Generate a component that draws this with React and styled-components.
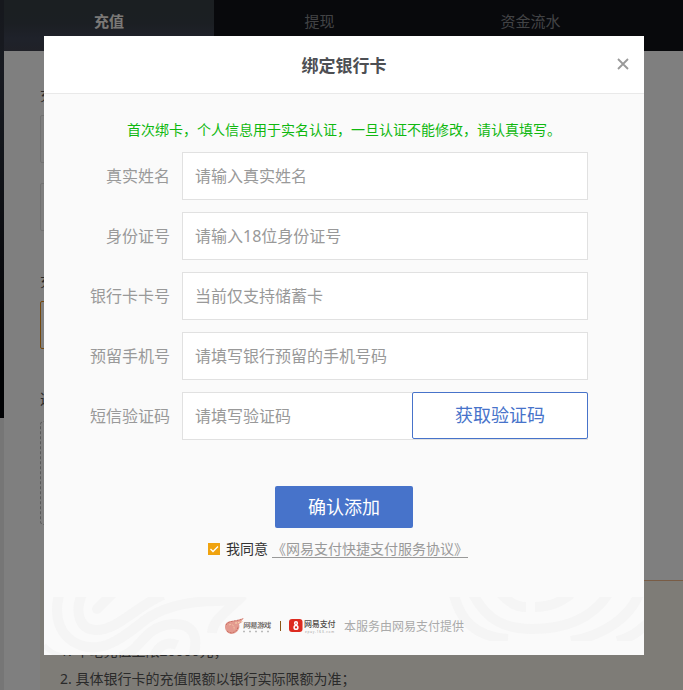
import React, { useState } from 'react'
import styled, { createGlobalStyle } from 'styled-components'

const GlobalStyle = createGlobalStyle`
  * {
    box-sizing: border-box;
  }
  body {
    margin: 0;
    height: 690px;
    overflow: hidden;
    background: #ececec;
    font-family: 'Noto Sans', 'Noto Sans CJK SC', sans-serif;
    color: #333;
  }
  input, button {
    font-family: inherit;
  }
`
const Page = styled.div`
  display: flex;
  height: 690px;
  overflow: hidden;
`
const Edge = styled.div`
  flex: 0 0 4px;
  height: 418px;
  background: linear-gradient(#2c303a 0, #303542 70px, #252b36 150px, #15171f 260px, #030409 370px);
`
const Main = styled.div`
  flex: 1;
  min-width: 0;
  background: #fff;
`
const Tabs = styled.nav`
  display: flex;
  height: 51px;
  background: #101219;
`
const Tab = styled.a`
  width: ${p => (p.$active ? 210 : 211)}px;
  line-height: 42px;
  font-size: 15px;
  text-align: center;
  color: ${p => (p.$active ? '#f4f0ec' : '#85878b')};
  font-weight: ${p => (p.$active ? 700 : 400)};
  background: ${p =>
    p.$active ? 'linear-gradient(#363e44 0, #373e46 45%, #3e4455 75%, #404350)' : 'none'};
`
const Content = styled.div`
  display: flex;
  flex-direction: column;
  padding: 34px 0 0 36px;
`
const SectionTitle = styled.div`
  height: 30px;
  line-height: 20px;
  font-size: 14px;
  color: #555;
`
const Choice = styled.div`
  flex: none;
  height: 48px;
  margin-bottom: 20px;
  border: 1px solid ${p => (p.$selected ? '#e8901a' : '#e2e2e2')};
  border-radius: 2px;
`
const Group = styled.section`
  width: 560px;
  height: ${p => p.$height}px;
`
const AddCard = styled.div`
  height: 104px;
  margin-top: 2px;
  border: 1px dashed #b5b5b5;
  border-radius: 4px;
`
const Tips = styled.ol`
  height: 120px;
  margin: 0;
  padding: 57px 20px 0;
  list-style: none;
  background: linear-gradient(90deg, #fdf9ef 30%, #f2b98a 60%) no-repeat 0 0 / 100% 1px #fdf9ef;
  font-size: 14px;
  line-height: 28px;
  color: #555;
`
const Mask = styled.div`
  position: fixed;
  inset: 0;
  padding: 36px 39px 0 44px;
  background: rgba(0, 0, 0, 0.5);
`
const Dialog = styled.div`
  display: flex;
  flex-direction: column;
  width: 600px;
  height: 619px;
  background: #fafafa;
`
const Header = styled.header`
  display: grid;
  grid-template-columns: 1fr auto 1fr;
  align-items: center;
  height: 58px;
  padding: 0 15px;
  border-bottom: 1px solid #e9e9e9;
  background: #fff;
`
const Title = styled.h2`
  grid-column: 2;
  margin: 0;
  padding-top: 2px;
  font-size: 17px;
  line-height: 24px;
  color: #4d4f53;
`
const Close = styled.button`
  justify-self: end;
  width: 12px;
  height: 12px;
  margin-bottom: 2px;
  padding: 0;
  border: 0;
  background: none;
  svg {
    display: block;
  }
`
const Notice = styled.p`
  margin: 26px 0 12px;
  font-size: 14px;
  line-height: 20px;
  text-align: center;
  color: #0fb80f;
`
const Form = styled.form`
  display: flex;
  flex-direction: column;
  gap: 12px;
`
const Row = styled.label`
  display: grid;
  grid-template-columns: 126px 406px;
  column-gap: 12px;
  height: 48px;
`
const Name = styled.span`
  line-height: 48px;
  font-size: 16px;
  text-align: right;
  color: #999;
`
const Field = styled.span`
  display: flex;
  border: 1px solid #e1e1e1;
  background: #fff;
`
const Input = styled.input`
  flex: 1;
  min-width: 0;
  padding: 0 12px 1px;
  border: 0;
  outline: 0;
  background: none;
  font-size: 16px;
  color: #333;
  &::placeholder {
    color: #999;
    opacity: 1;
  }
`
const CodeButton = styled.button`
  width: 176px;
  height: 47px;
  margin: -1px -1px 0 0;
  padding: 0;
  border: 1px solid #4773ca;
  border-radius: 2px;
  background: #fff;
  font-size: 18px;
  line-height: 45px;
  color: #4773ca;
`
const Submit = styled.button`
  align-self: center;
  width: 138px;
  height: 42px;
  margin-top: 46px;
  padding: 0;
  border: 0;
  border-radius: 2px;
  background: #4773ca;
  font-size: 18px;
  line-height: 42px;
  color: #fff;
`
const Agreement = styled.div`
  display: flex;
  align-items: center;
  height: 20px;
  margin: 11px 0 0 164px;
  font-size: 14px;
  line-height: 18px;
`
const Check = styled.button`
  width: 12px;
  height: 12px;
  margin-right: 6px;
  padding: 0;
  border: 0;
  background: #f0a30f;
  svg {
    display: block;
  }
`
const Terms = styled.a`
  margin-left: 4px;
  height: 17px;
  line-height: 16px;
  border-bottom: 1px solid #999;
  color: #999;
`
const Footer = styled.footer`
  display: grid;
  height: 58px;
  margin-top: auto;
  overflow: hidden;
  > * {
    grid-area: 1 / 1;
  }
`
const Provider = styled.div`
  display: flex;
  align-items: center;
  height: 58px;
  padding-left: 180px;
  font-size: 12px;
  color: #aaa;
`
const Divider = styled.i`
  width: 1px;
  height: 10px;
  margin: 0 8px;
  background: #8b5716;
`
const Note = styled.span`
  margin-left: 7px;
`

const Waves = () => (
  <svg width="600" height="58" fill="none" stroke="#f5f5f5" strokeWidth="10">
    <path d="M15-2C9 22 17 41 36 48C57 56 76 43 96 27C118 8 147 4 174 4C185 4 193 1 197-3" />
    <path d="M38-3C30 16 36 32 51 33C73 34 91 10 119-2" />
    <path d="M53 12L68-3" strokeLinecap="round" />
    <path d="M76 60C98 54 98 30 128 27C150 26 155 40 149 60" />
    <path d="M110 60C114 48 124 44 133 48" />
    <path d="M168 36C169 22 184 14 199-2" />
    <path d="M0 48C5 55 12 57 23 61" strokeWidth="5" />
    <svg width="600" height="44">
      <path d="M410-2C416 22 430 40 464 42" />
      <path d="M429-3C443 24 462 32 488 32C524 32 549 20 564-3" />
      <path d="M457-3C465 6 473 10 482 10" />
      <path d="M491 10C505 10 515 6 527-3" />
      <path d="M527 44C562 38 586 19 595-3" />
      <path d="M573 44C586 41 594 35 604 26" />
    </svg>
  </svg>
)

const GamesLogo = () => (
  <svg width="48" height="18" viewBox="0 0 48 18">
    <path
      d="M1 10C1 6 4 4 8 4C12 3 15 3 20 1L17 4.5L19 4.5L15 7C17 12 12 17 7 17C3 16 1 13 1 10Z"
      fill="#e39a8f"
    />
    <g fill="none" stroke="#bd5a4e" strokeWidth=".7" strokeDasharray="2 1">
      <path d="M2 8C5 3 11 5 19 1.5" />
      <path d="M3 14C7 18 14 15 14 9" />
      <path d="M11 6C14 6 15 5 18 4.5" stroke="#f8d3ac" strokeWidth="1.2" />
      <path d="M5 8C8 6 11 9 10 13" stroke="#f8d3ac" />
    </g>
    <text x="19" y="11.5" fontSize="7.5" fontWeight="500" textLength="28" fill="#5f5955" transform="skewX(-5) translate(1 0)">
      网易游戏
    </text>
    <path d="M19 14.5H46" stroke="#bbb" strokeWidth="1.5" strokeDasharray="2 4" />
  </svg>
)

const PayLogo = () => (
  <svg width="48" height="18" viewBox="0 0 48 18">
    <rect x="0" y="2" width="13.5" height="13" rx="3" fill="#dd2b20" />
    <g fill="none" stroke="#fff" strokeWidth="1.5">
      <circle cx="7" cy="6.2" r="1.4" />
      <circle cx="7" cy="10.4" r="1.9" />
    </g>
    <text x="15" y="9.6" fontSize="8" fontWeight="500" textLength="31.5" fill="#4f4a48">
      网易支付
    </text>
    <text x="16" y="15.8" fontSize="3" textLength="29" fill="#999">
      epay.163.com
    </text>
  </svg>
)

const fields = [
  { name: '真实姓名', placeholder: '请输入真实姓名' },
  { name: '身份证号', placeholder: '请输入18位身份证号' },
  { name: '银行卡卡号', placeholder: '当前仅支持储蓄卡' },
  { name: '预留手机号', placeholder: '请填写银行预留的手机号码' },
  { name: '短信验证码', placeholder: '请填写验证码', hasCode: true },
]

const Background = () => (
  <Page>
    <Edge />
    <Main>
      <Tabs>
        <Tab $active>充值</Tab>
        <Tab>提现</Tab>
        <Tab>资金流水</Tab>
      </Tabs>
      <Content>
        <Group $height={186}>
          <SectionTitle>充值方式</SectionTitle>
          <Choice />
          <Choice />
        </Group>
        <Group $height={118}>
          <SectionTitle>充值银行</SectionTitle>
          <Choice $selected />
        </Group>
        <Group $height={191}>
          <SectionTitle>选择银行卡</SectionTitle>
          <AddCard />
        </Group>
        <Tips>
          <li>1. 单笔充值上限20000元；</li>
          <li>2. 具体银行卡的充值限额以银行实际限额为准；</li>
        </Tips>
      </Content>
    </Main>
  </Page>
)

const BindCard = () => {
  const [agreed, setAgreed] = useState(true)

  return (
    <Dialog>
      <Header>
        <Title>绑定银行卡</Title>
        <Close>
          <svg width="12" height="12" stroke="#999" strokeWidth="1.8">
            <path d="M1 1L11 11M11 1L1 11" />
          </svg>
        </Close>
      </Header>
      <Notice>首次绑卡，个人信息用于实名认证，一旦认证不能修改，请认真填写。</Notice>
      <Form onSubmit={e => e.preventDefault()}>
        {fields.map(({ name, placeholder, hasCode }) => (
          <Row key={name}>
            <Name>{name}</Name>
            <Field>
              <Input placeholder={placeholder} />
              {hasCode && <CodeButton type="button">获取验证码</CodeButton>}
            </Field>
          </Row>
        ))}
      </Form>
      <Submit>确认添加</Submit>
      <Agreement>
        <Check onClick={() => setAgreed(!agreed)}>
          {agreed && (
            <svg width="12" height="12" fill="none" stroke="#fff" strokeWidth="1.3">
              <path d="M2.5 6L5 8.5L10 3.5" />
            </svg>
          )}
        </Check>
        我同意
        <Terms>《网易支付快捷支付服务协议》</Terms>
      </Agreement>
      <Footer>
        <Waves />
        <Provider>
          <GamesLogo />
          <Divider />
          <PayLogo />
          <Note>本服务由网易支付提供</Note>
        </Provider>
      </Footer>
    </Dialog>
  )
}

const App = () => (
  <>
    <GlobalStyle />
    <Background />
    <Mask>
      <BindCard />
    </Mask>
  </>
)

export default App
